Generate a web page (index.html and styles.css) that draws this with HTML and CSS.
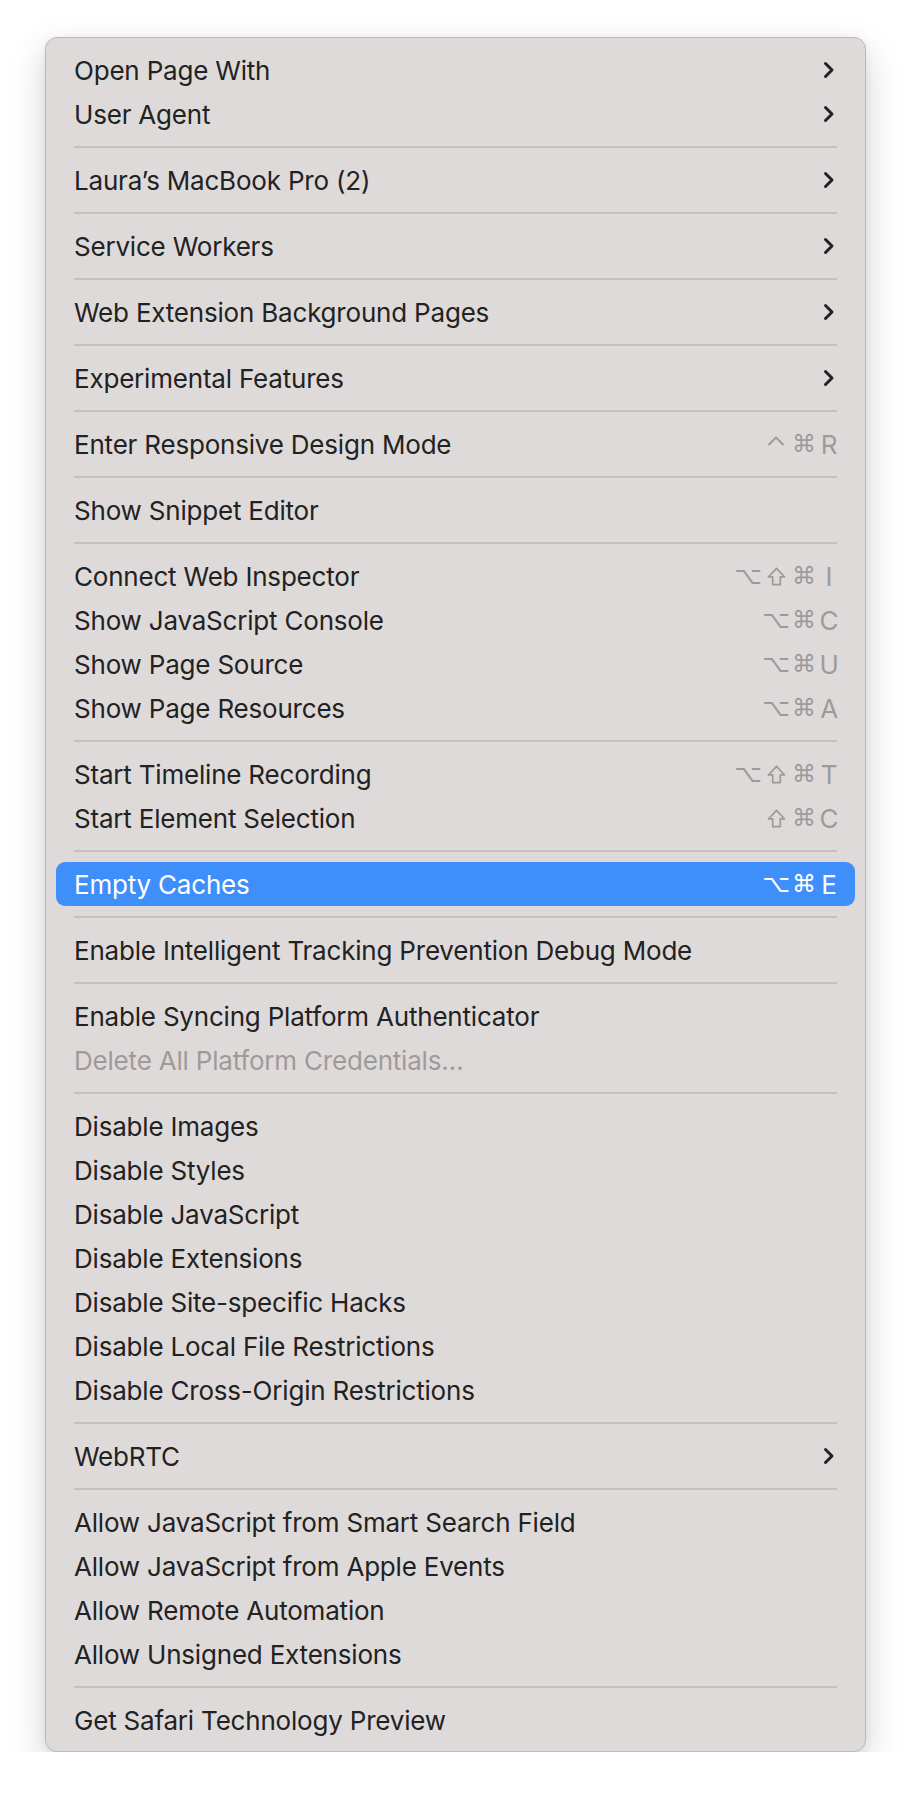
FILE: index.html
```html
<!doctype html>
<html lang="en">
  <head>
    <meta charset="utf-8">
    <title>Develop menu</title>
    <link rel="stylesheet" href="styles.css">
  </head>
  <body>
    <div class="menu">
      <div class="item">Open Page With<svg class="chev" viewBox="0 0 12 18"><path d="M2.5 2.5 L9 9 L2.5 15.5"/></svg></div>
      <div class="item">User Agent<svg class="chev" viewBox="0 0 12 18"><path d="M2.5 2.5 L9 9 L2.5 15.5"/></svg></div>
      <div class="sep"></div>
      <div class="item">Laura’s MacBook Pro (2)<svg class="chev" viewBox="0 0 12 18"><path d="M2.5 2.5 L9 9 L2.5 15.5"/></svg></div>
      <div class="sep"></div>
      <div class="item">Service Workers<svg class="chev" viewBox="0 0 12 18"><path d="M2.5 2.5 L9 9 L2.5 15.5"/></svg></div>
      <div class="sep"></div>
      <div class="item">Web Extension Background Pages<svg class="chev" viewBox="0 0 12 18"><path d="M2.5 2.5 L9 9 L2.5 15.5"/></svg></div>
      <div class="sep"></div>
      <div class="item">Experimental Features<svg class="chev" viewBox="0 0 12 18"><path d="M2.5 2.5 L9 9 L2.5 15.5"/></svg></div>
      <div class="sep"></div>
      <div class="item">Enter Responsive Design Mode<span class="keys"><span class="mod"><svg class="ctrl" viewBox="0 0 18 10"><path d="M1.5 9 L9 1.5 L16.5 9"/></svg></span><span class="mod">⌘</span><span class="key">R</span></span></div>
      <div class="sep"></div>
      <div class="item">Show Snippet Editor</div>
      <div class="sep"></div>
      <div class="item">Connect Web Inspector<span class="keys"><span class="mod">⌥</span><span class="mod"><svg class="shift" viewBox="0 0 20 20"><path d="M10 1.5 L18.5 10.5 H14 V18.5 H6 V10.5 H1.5 Z"/></svg></span><span class="mod">⌘</span><span class="key">I</span></span></div>
      <div class="item">Show JavaScript Console<span class="keys"><span class="mod">⌥</span><span class="mod">⌘</span><span class="key">C</span></span></div>
      <div class="item">Show Page Source<span class="keys"><span class="mod">⌥</span><span class="mod">⌘</span><span class="key">U</span></span></div>
      <div class="item">Show Page Resources<span class="keys"><span class="mod">⌥</span><span class="mod">⌘</span><span class="key">A</span></span></div>
      <div class="sep"></div>
      <div class="item">Start Timeline Recording<span class="keys"><span class="mod">⌥</span><span class="mod"><svg class="shift" viewBox="0 0 20 20"><path d="M10 1.5 L18.5 10.5 H14 V18.5 H6 V10.5 H1.5 Z"/></svg></span><span class="mod">⌘</span><span class="key">T</span></span></div>
      <div class="item">Start Element Selection<span class="keys"><span class="mod"><svg class="shift" viewBox="0 0 20 20"><path d="M10 1.5 L18.5 10.5 H14 V18.5 H6 V10.5 H1.5 Z"/></svg></span><span class="mod">⌘</span><span class="key">C</span></span></div>
      <div class="sep"></div>
      <div class="item active">Empty Caches<span class="keys"><span class="mod">⌥</span><span class="mod">⌘</span><span class="key">E</span></span></div>
      <div class="sep"></div>
      <div class="item">Enable Intelligent Tracking Prevention Debug Mode</div>
      <div class="sep"></div>
      <div class="item">Enable Syncing Platform Authenticator</div>
      <div class="item disabled">Delete All Platform Credentials…</div>
      <div class="sep"></div>
      <div class="item">Disable Images</div>
      <div class="item">Disable Styles</div>
      <div class="item">Disable JavaScript</div>
      <div class="item">Disable Extensions</div>
      <div class="item">Disable Site-specific Hacks</div>
      <div class="item">Disable Local File Restrictions</div>
      <div class="item">Disable Cross-Origin Restrictions</div>
      <div class="sep"></div>
      <div class="item">WebRTC<svg class="chev" viewBox="0 0 12 18"><path d="M2.5 2.5 L9 9 L2.5 15.5"/></svg></div>
      <div class="sep"></div>
      <div class="item">Allow JavaScript from Smart Search Field</div>
      <div class="item">Allow JavaScript from Apple Events</div>
      <div class="item">Allow Remote Automation</div>
      <div class="item">Allow Unsigned Extensions</div>
      <div class="sep"></div>
      <div class="item">Get Safari Technology Preview</div>
    </div>
  </body>
</html>
```

FILE: styles.css
```css
:root {
  --bg: #dfdada;
  --text: #222222;
  --dim: #9e9a9a;
  --line: #c6c0c0;
  --hl: #3f8ffb;
}

html {
  background: #ffffff;
  font-family: Inter, "Noto Sans", sans-serif;
  color: var(--text);
}

body {
  margin: 0;
  padding: 37px 0 0 45px;
}

.menu {
  box-sizing: border-box;
  width: 821px;
  padding: 10px 10px 9px;
  background: var(--bg);
  border: 1px solid #bdb8b8;
  border-radius: 12px;
  box-shadow: 0 14px 36px rgba(0, 0, 0, 0.18), 0 2px 8px rgba(0, 0, 0, 0.06);
}

.item {
  display: flex;
  align-items: center;
  justify-content: space-between;
  height: 44px;
  padding: 0 20px 0 18px;
  border-radius: 9px;
  font-size: 26px;
  letter-spacing: -0.2px;
  white-space: nowrap;
}

.item.active {
  background: var(--hl);
  color: #fff;
}

.item.disabled {
  color: var(--dim);
}

.sep {
  height: 2px;
  margin: 10px 18px;
  background: var(--line);
}

.chev {
  width: 12px;
  height: 18px;
  fill: none;
  stroke: var(--text);
  stroke-width: 3;
  stroke-linecap: round;
  stroke-linejoin: round;
}

.keys {
  display: flex;
  align-items: center;
  margin-right: -5px;
  color: var(--dim);
}

.active .keys {
  color: #fff;
}

.mod {
  display: flex;
  align-items: center;
  justify-content: center;
  width: 28px;
  font-family: "DejaVu Sans", sans-serif;
  font-size: 24px;
}

.mod svg {
  fill: none;
  stroke: currentColor;
  stroke-linejoin: round;
}

.shift {
  width: 19px;
  height: 19px;
  stroke-width: 1.8;
}

.ctrl {
  width: 18px;
  height: 10px;
  margin-bottom: 7px;
  stroke-width: 2;
}

.key {
  width: 22px;
  text-align: center;
  font-size: 26px;
}
```
